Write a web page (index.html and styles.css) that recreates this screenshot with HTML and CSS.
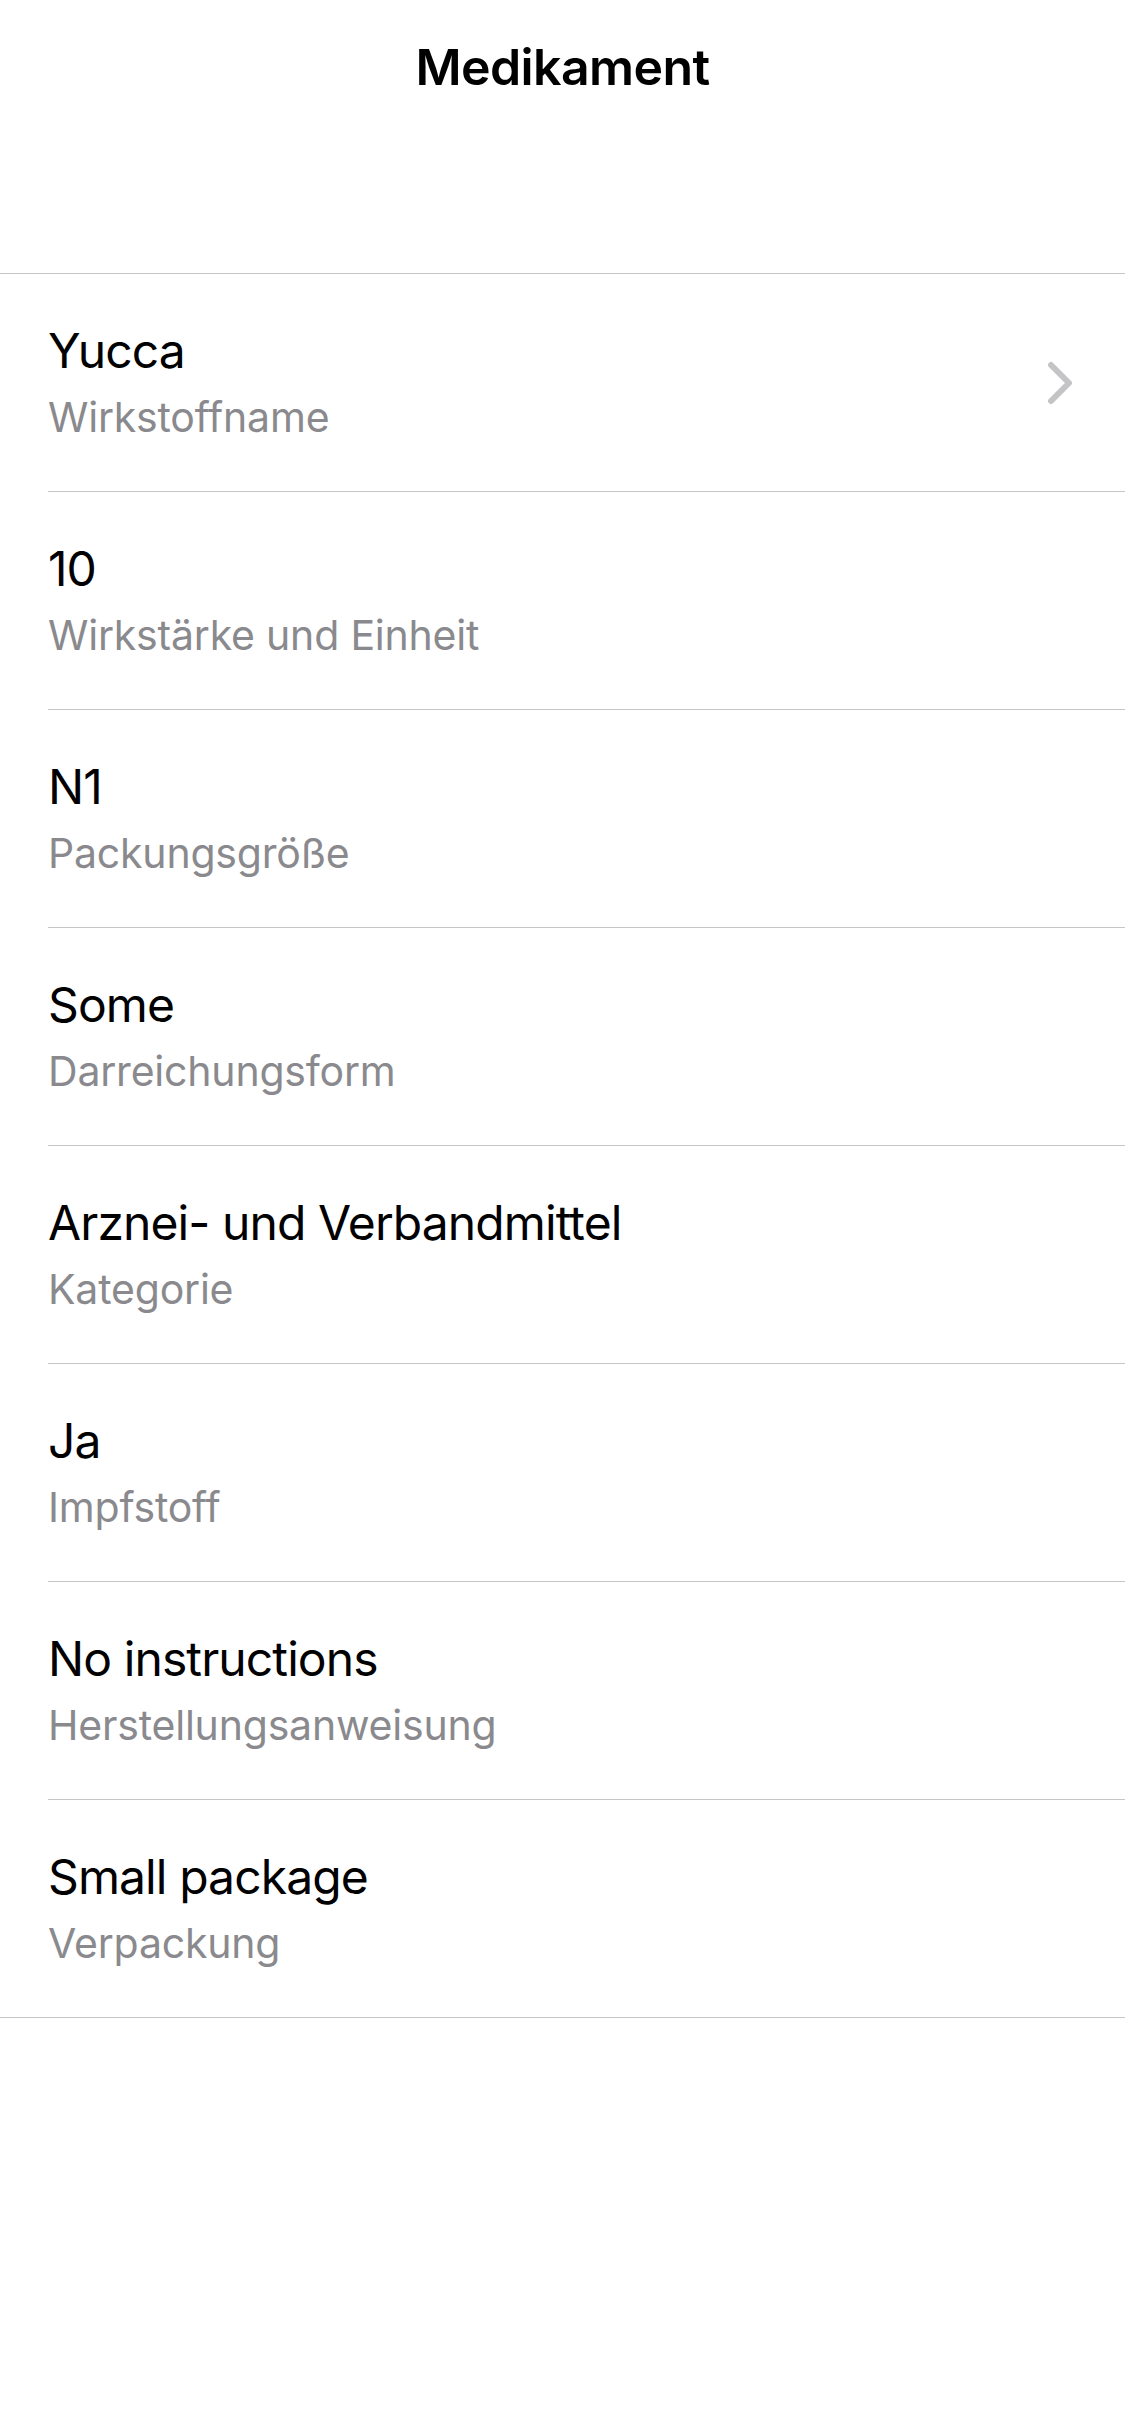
FILE: index.html
```html
<!DOCTYPE html>
<html lang="de">
<head>
<meta charset="utf-8">
<title>Medikament</title>
<link rel="stylesheet" href="styles.css">
</head>
<body>
<header class="nav">
  <h1 class="nav-title">Medikament</h1>
</header>
<ul class="list">
  <li class="row">
    <div class="text">
      <div class="value">Yucca</div>
      <div class="label">Wirkstoffname</div>
    </div>
    <svg class="chevron" width="26" height="44" viewBox="0 0 26 44" aria-hidden="true">
      <path d="M4 4 L22 22 L4 40" fill="none" stroke="#c4c4c7" stroke-width="6" stroke-linecap="round" stroke-linejoin="round"/>
    </svg>
  </li>
  <li class="row">
    <div class="text">
      <div class="value">10</div>
      <div class="label">Wirkstärke und Einheit</div>
    </div>
  </li>
  <li class="row">
    <div class="text">
      <div class="value">N1</div>
      <div class="label">Packungsgröße</div>
    </div>
  </li>
  <li class="row">
    <div class="text">
      <div class="value">Some</div>
      <div class="label">Darreichungsform</div>
    </div>
  </li>
  <li class="row">
    <div class="text">
      <div class="value">Arznei- und Verbandmittel</div>
      <div class="label">Kategorie</div>
    </div>
  </li>
  <li class="row">
    <div class="text">
      <div class="value">Ja</div>
      <div class="label">Impfstoff</div>
    </div>
  </li>
  <li class="row">
    <div class="text">
      <div class="value">No instructions</div>
      <div class="label">Herstellungsanweisung</div>
    </div>
  </li>
  <li class="row last">
    <div class="text">
      <div class="value">Small package</div>
      <div class="label">Verpackung</div>
    </div>
  </li>
</ul>
</body>
</html>
```
FILE: styles.css
```css
html, body {
  margin: 0;
  padding: 0;
  background: #ffffff;
}
body {
  width: 1125px;
  min-height: 2436px;
  font-family: Inter, "Noto Sans", "Liberation Sans", sans-serif;
  color: #000000;
}
.nav {
  height: 273px;
  box-sizing: border-box;
  padding-top: 36px;
  display: flex;
  justify-content: center;
  align-items: flex-start;
}
.nav-title {
  margin: 0;
  font-size: 50px;
  line-height: 62px;
  font-weight: 600;
  letter-spacing: -0.6px;
}
.list {
  list-style: none;
  margin: 0;
  padding: 0;
  border-top: 1px solid #c6c6c8;
  border-bottom: 1px solid #c6c6c8;
}
.row {
  position: relative;
  height: 218px;
  box-sizing: border-box;
  padding: 48px 52px 0 48px;
  display: flex;
  justify-content: space-between;
  align-items: flex-start;
}
.row::after {
  content: "";
  position: absolute;
  left: 48px;
  right: 0;
  bottom: 0;
  height: 1px;
  background: #c6c6c8;
}
.row.last {
  height: 217px;
}
.row.last::after {
  display: none;
}
.value {
  font-size: 48px;
  line-height: 58px;
  font-weight: 400;
  letter-spacing: -0.9px;
}
.label {
  margin-top: 12px;
  font-size: 41px;
  line-height: 50px;
  color: #8a8a8e;
  letter-spacing: -0.2px;
}
.chevron {
  align-self: center;
  margin-top: -48px;
}
```
